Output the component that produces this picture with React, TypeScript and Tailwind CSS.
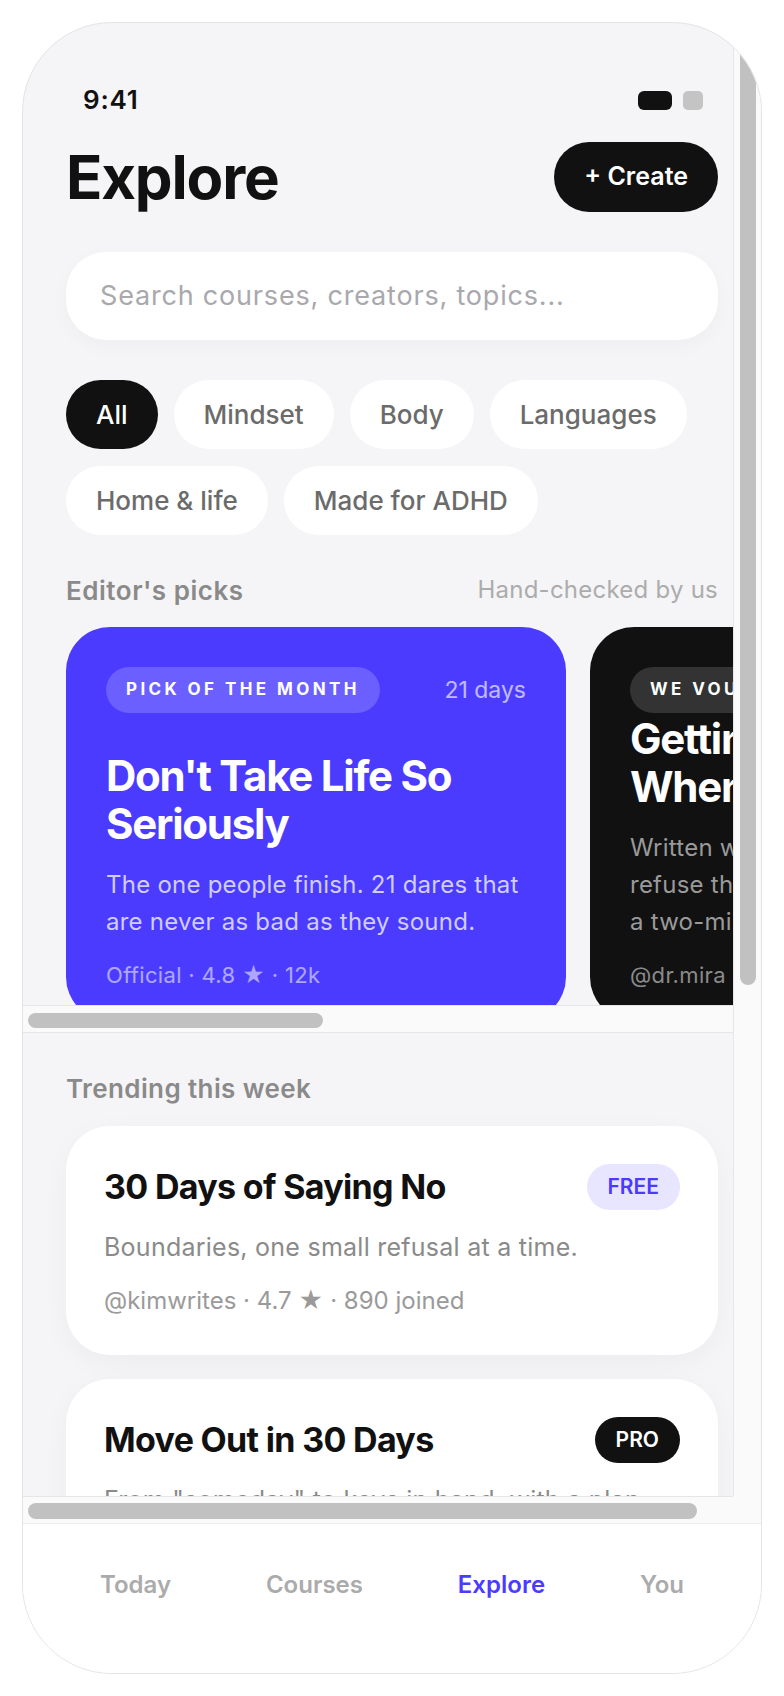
import React from "react";

const chips = ["All", "Mindset", "Body", "Languages", "Home & life", "Made for ADHD"];

type Pick = {
  badge: string;
  days: string;
  title: string;
  desc: string;
  meta: string;
  dark?: boolean;
};

const picks: Pick[] = [
  {
    badge: "Pick of the month",
    days: "21 days",
    title: "Don't Take Life So Seriously",
    desc: "The one people finish. 21 dares that are never as bad as they sound.",
    meta: "Official · 4.8 ★ · 12k",
  },
  {
    badge: "We vouch for this",
    days: "14 days",
    title: "Getting Things Done When You Just Can't",
    desc: "Written with coaches for brains that refuse the usual advice. Each day is a two-minute start.",
    meta: "@dr.mira · 4.9 ★ · 3.1k",
    dark: true,
  },
  {
    badge: "Staff favourite",
    days: "10 days",
    title: "Cook Something Real",
    desc: "Ten dinners, ten skills. No fancy kit, no judgement about the mess.",
    meta: "@chefsam · 4.6 ★ · 5k",
  },
];

type Trend = { title: string; tag: "FREE" | "PRO"; desc: string; meta: string };

const trends: Trend[] = [
  {
    title: "30 Days of Saying No",
    tag: "FREE",
    desc: "Boundaries, one small refusal at a time.",
    meta: "@kimwrites · 4.7 ★ · 890 joined",
  },
  {
    title: "Move Out in 30 Days",
    tag: "PRO",
    desc: "From \"someday\" to keys in hand, with a plan.",
    meta: "@homebase · 4.5 ★ · 610 joined",
  },
];

function PickCard({ p }: { p: Pick }) {
  const dark = p.dark;
  return (
    <div
      className={
        "w-[500px] shrink-0 h-[394px] rounded-[44px] px-10 pt-10 pb-[31px] flex flex-col " +
        (dark ? "bg-[#111111]" : "bg-[#4a3bff]")
      }
    >
      <div className="flex items-center justify-between">
        <span
          className={
            "h-[46px] px-[20px] rounded-full flex items-center text-[17px] font-bold uppercase tracking-[0.2em] text-white whitespace-nowrap " +
            (dark ? "bg-[#333333]" : "bg-[#6b5fff]")
          }
        >
          {p.badge}
        </span>
        <span className={"text-[23px] whitespace-nowrap " + (dark ? "text-[#8a8a8a]" : "text-white/65")}>{p.days}</span>
      </div>
      <div className="mt-auto text-[42px] leading-[48px] font-bold tracking-[-0.03em] text-white">
        {p.title}
      </div>
      <div
        className={
          "mt-[18px] text-[24px] leading-[37px] tracking-[0.01em] " + (dark ? "text-[#9a9a9a]" : "text-white/75")
        }
      >
        {p.desc}
      </div>
      <div
        className={
          "mt-5 text-[22px] leading-[30px] tracking-[0.015em] " + (dark ? "text-[#8a8a8a]" : "text-white/55")
        }
      >
        {p.meta}
      </div>
    </div>
  );
}

function TrendCard({ t }: { t: Trend }) {
  return (
    <div className="rounded-[44px] bg-white px-[38px] pt-[38px] pb-[39px] shadow-[0_8px_28px_rgba(0,0,0,0.04)]">
      <div className="flex items-center justify-between">
        <div className="text-[34px] font-bold tracking-[-0.02em] text-[#111111] leading-[46px]">{t.title}</div>
        <span
          className={
            "h-[46px] px-[21px] rounded-full flex items-center text-[21px] font-semibold " +
            (t.tag === "FREE" ? "bg-[#e7e5ff] text-[#4a3bff]" : "bg-[#111111] text-white")
          }
        >
          {t.tag}
        </span>
      </div>
      <div className="mt-5 text-[25px] leading-[34px] tracking-[0.01em] text-[#8a8a8a]">{t.desc}</div>
      <div className="mt-[22px] text-[24px] leading-[30px] text-[#9a9a9a]">{t.meta}</div>
    </div>
  );
}

export default function App() {
  return (
    <div className="min-h-screen w-full bg-white flex justify-center pt-[22px] font-['Inter',sans-serif]">
      <div className="w-[740px] h-[1652px] rounded-[90px] overflow-hidden border border-[#e4e4e7] bg-[#f5f5f7] flex flex-col">
        {/* scroll area */}
        <div className="flex-1 min-h-0 flex flex-col">
          <div className="flex-1 min-h-0 flex">
            <div className="w-[710px] shrink-0 overflow-hidden">
              <div className="w-[738px]">
                <div className="pl-[60px] pr-[58px] pt-[62px] h-[92px] flex items-center justify-between">
                  <span className="text-[26px] font-semibold tracking-[0.03em] text-[#111111] leading-[30px]">9:41</span>
                  <div className="flex items-center gap-[11px]">
                    <span className="w-[34px] h-[19px] rounded-[6px] bg-[#111111]" />
                    <span className="w-[20px] h-[19px] rounded-[5px] bg-[#c4c4c4]" />
                  </div>
                </div>

                <div className="px-[43px]">
                  <div className="mt-[27px] flex items-center justify-between h-[70px]">
                    <h1 className="text-[60px] font-bold tracking-[-0.02em] text-[#111111] leading-none">Explore</h1>
                    <button className="h-[70px] px-[30px] rounded-full bg-[#111111] text-white text-[25px] font-semibold">
                      + Create
                    </button>
                  </div>

                  <div className="mt-[40px] h-[88px] rounded-[40px] bg-white shadow-[0_6px_20px_rgba(0,0,0,0.03)] flex items-center pl-[34px] text-[27px] tracking-[0.03em] text-[#a8a8ad]">
                    Search courses, creators, topics...
                  </div>

                  <div className="mt-[40px] flex flex-wrap gap-x-[16px] gap-y-[17px]">
                    {chips.map((c, i) => (
                      <span
                        key={c}
                        className={
                          "h-[69px] px-[30px] rounded-full flex items-center text-[26px] font-medium " +
                          (i === 0 ? "bg-[#111111] text-white" : "bg-white text-[#6b6b6b]")
                        }
                      >
                        {c}
                      </span>
                    ))}
                  </div>

                  <div className="mt-[39px] flex items-center justify-between h-[32px]">
                    <span className="text-[26px] font-semibold tracking-[0.02em] text-[#8a8a8a]">Editor's picks</span>
                    <span className="text-[24px] tracking-[0.01em] text-[#acacac]">Hand-checked by us</span>
                  </div>
                </div>

                {/* carousel */}
                <div className="mt-[21px]">
                  <div className="h-[378px] overflow-hidden">
                    <div className="flex gap-6 pl-[43px] w-max">
                      {picks.map((p) => (
                        <PickCard key={p.title} p={p} />
                      ))}
                    </div>
                  </div>
                  <div className="h-[28px] bg-[#fafafa] border-y border-[#e6e6e6] pt-[7px] pl-[5px]">
                    <div className="w-[295px] h-[15px] rounded-full bg-[#c1c1c1]" />
                  </div>
                </div>

                <div className="px-[43px]">
                  <div className="mt-[39px] h-[32px] flex items-center text-[26px] font-semibold tracking-[0.015em] text-[#8a8a8a]">
                    Trending this week
                  </div>
                  <div className="mt-[22px] flex flex-col gap-6">
                    {trends.map((t) => (
                      <TrendCard key={t.title} t={t} />
                    ))}
                  </div>
                </div>
              </div>
            </div>
            {/* vertical scrollbar */}
            <div className="flex-1 bg-[#fafafa] border-l border-[#e6e6e6] pl-[6px] pt-[6px]">
              <div className="w-[16px] h-[956px] rounded-full bg-[#c1c1c1]" />
            </div>
          </div>
          {/* horizontal scrollbar */}
          <div className="h-[27px] shrink-0 flex">
            <div className="w-[710px] shrink-0 bg-[#fafafa] border-t border-[#e6e6e6] pt-[6px] pl-[5px]">
              <div className="w-[669px] h-[16px] rounded-full bg-[#c1c1c1]" />
            </div>
            <div className="flex-1 bg-[#fafafa]" />
          </div>
        </div>

        <nav className="h-[150px] shrink-0 bg-white border-t border-[#ececec] flex justify-between px-[77px] pt-[46px]">
          {["Today", "Courses", "Explore", "You"].map((n) => (
            <span
              key={n}
              className={
                "text-[24px] font-semibold leading-[30px] " + (n === "Explore" ? "text-[#4a3bff]" : "text-[#ababab]")
              }
            >
              {n}
            </span>
          ))}
        </nav>
      </div>
    </div>
  );
}
